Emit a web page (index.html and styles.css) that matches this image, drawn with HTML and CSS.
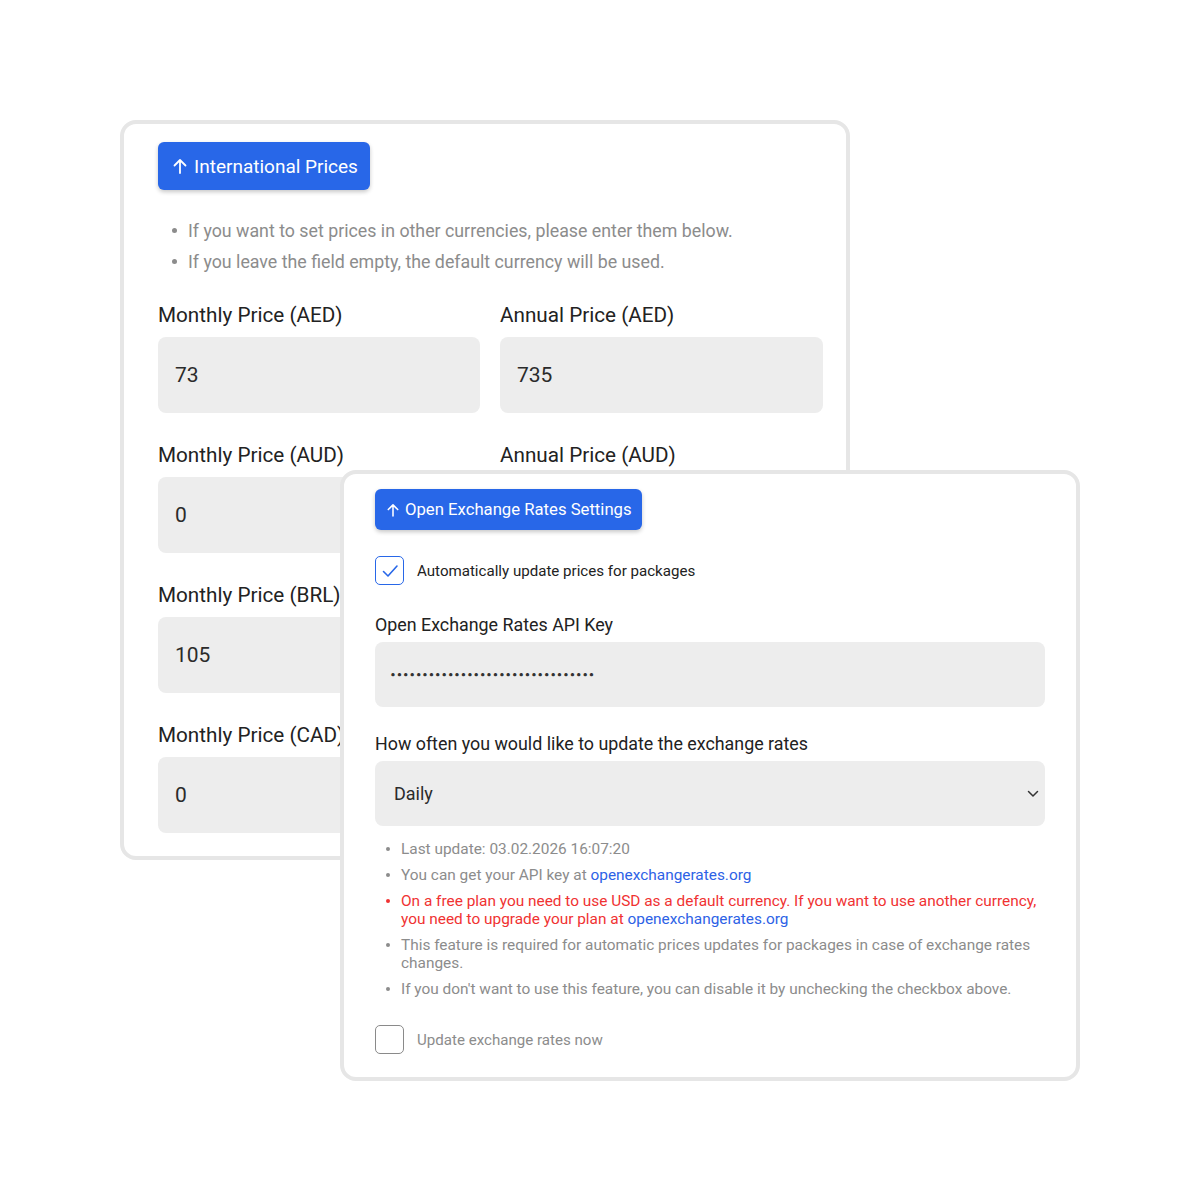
FILE: index.html
```html
<!DOCTYPE html>
<html lang="en">
<head>
    <meta charset="UTF-8">
    <meta name="viewport" content="width=device-width, initial-scale=1.0">
    <title>Package Prices</title>
    <link rel="stylesheet" href="styles.css">
</head>
<body>
    <div class="stage">
        <!-- international prices panel -->
        <section class="card card-prices">
            <button class="btn btn-lg" type="button">
                <svg class="arrow" viewBox="0 0 14 16" width="14" height="16"><path d="M7 15V2M1.5 7.5L7 2l5.5 5.5" fill="none" stroke="currentColor" stroke-width="1.8" stroke-linecap="round" stroke-linejoin="round"/></svg>
                International Prices
            </button>
            <ul class="hints hints-lg">
                <li>If you want to set prices in other currencies, please enter them below.</li>
                <li>If you leave the field empty, the default currency will be used.</li>
            </ul>
            <div class="price-grid">
                <div class="field">
                    <label>Monthly Price (AED)</label>
                    <div class="input input-lg">73</div>
                </div>
                <div class="field">
                    <label>Annual Price (AED)</label>
                    <div class="input input-lg">735</div>
                </div>
                <div class="field">
                    <label>Monthly Price (AUD)</label>
                    <div class="input input-lg">0</div>
                </div>
                <div class="field">
                    <label>Annual Price (AUD)</label>
                    <div class="input input-lg"></div>
                </div>
                <div class="field">
                    <label>Monthly Price (BRL)</label>
                    <div class="input input-lg">105</div>
                </div>
                <div class="field">
                    <label></label>
                    <div class="input input-lg"></div>
                </div>
                <div class="field">
                    <label>Monthly Price (CAD)</label>
                    <div class="input input-lg">0</div>
                </div>
                <div class="field">
                    <label></label>
                    <div class="input input-lg"></div>
                </div>
            </div>
        </section>

        <!-- exchange rate settings panel, sits on top -->
        <section class="card card-rates">
            <button class="btn btn-sm" type="button">
                <svg class="arrow" viewBox="0 0 14 16" width="12" height="14"><path d="M7 15V2M1.5 7.5L7 2l5.5 5.5" fill="none" stroke="currentColor" stroke-width="1.8" stroke-linecap="round" stroke-linejoin="round"/></svg>
                Open Exchange Rates Settings
            </button>

            <div class="check-row">
                <span class="checkbox checked">
                    <svg viewBox="0 0 20 20" width="20" height="20"><path d="M3.5 10.5l4.5 4.5 9-10" fill="none" stroke="currentColor" stroke-width="1.6" stroke-linecap="round" stroke-linejoin="round"/></svg>
                </span>
                <span class="check-label">Automatically update prices for packages</span>
            </div>

            <div class="field field-sm field-first">
                <label>Open Exchange Rates API Key</label>
                <div class="input input-sm"><span class="dots">••••••••••••••••••••••••••••••••</span></div>
            </div>

            <div class="field field-sm">
                <label>How often you would like to update the exchange rates</label>
                <div class="input input-sm select">
                    <span>Daily</span>
                    <svg viewBox="0 0 12 8" width="12" height="8"><path d="M1.5 1.5L6 6l4.5-4.5" fill="none" stroke="currentColor" stroke-width="1.5" stroke-linecap="round" stroke-linejoin="round"/></svg>
                </div>
            </div>

            <ul class="hints hints-sm">
                <li>Last update: 03.02.2026 16:07:20</li>
                <li>You can get your API key at <a href="#">openexchangerates.org</a></li>
                <li class="warn">On a free plan you need to use USD as a default currency. If you want to use another currency,<br>you need to upgrade your plan at <a href="#">openexchangerates.org</a></li>
                <li>This feature is required for automatic prices updates for packages in case of exchange rates changes.</li>
                <li>If you don't want to use this feature, you can disable it by unchecking the checkbox above.</li>
            </ul>

            <div class="check-row check-row-last">
                <span class="checkbox"></span>
                <span class="check-label muted">Update exchange rates now</span>
            </div>
        </section>
    </div>
</body>
</html>
```

FILE: styles.css
```css
body {
    margin: 0;
    background-color: #fff;
    font-family: 'Roboto', 'Noto Sans', sans-serif;
    color: #222;
}

.stage {
    position: relative;
    width: 1200px;
    height: 1200px;
    padding: 120px 0 0 120px;
    box-sizing: border-box;
}

.card {
    box-sizing: border-box;
    background-color: #fff;
    border: 4px solid #e6e6e6;
    border-radius: 16px;
}

.card-prices {
    width: 730px;
    height: 740px;
    padding: 18px 23px 22px 34px;
}

/* the settings card overlaps the prices card */
.card-rates {
    position: absolute;
    left: 340px;
    top: 470px;
    width: 740px;
    padding: 15px 31px 23px 31px;
}

.btn {
    display: inline-flex;
    align-items: center;
    border: none;
    background-color: #2867e8;
    color: #fff;
    font-family: inherit;
    border-radius: 6px;
    box-shadow: 0 2px 4px rgba(0, 0, 0, 0.22);
    cursor: pointer;
}

.btn-lg {
    height: 48px;
    padding: 0 12px 0 15px;
    font-size: 19px;
    gap: 7px;
}

.btn-sm {
    height: 41px;
    padding: 0 10px 0 12px;
    font-size: 16.7px;
    gap: 6px;
}

.hints {
    list-style: none;
    margin: 0;
    padding: 0;
    color: #8c8c8c;
}

.hints li {
    position: relative;
}

.hints li::before {
    content: '';
    position: absolute;
    border-radius: 50%;
    background-color: currentColor;
}

.hints-lg {
    margin: 25px 0 24px;
    font-size: 17.8px;
    line-height: 31px;
}

.hints-lg li {
    padding-left: 30px;
}

.hints-lg li::before {
    left: 14px;
    top: 13px;
    width: 5px;
    height: 5px;
}

.hints-sm {
    margin: 14px 0 27px;
    font-size: 15.4px;
    line-height: 18px;
}

.hints-sm li {
    padding-left: 26px;
}

.hints-sm li + li {
    margin-top: 8px;
}

.hints-sm li::before {
    left: 11px;
    top: 7px;
    width: 4px;
    height: 4px;
}

.hints .warn {
    color: #f03232;
}

.hints a {
    color: #2d62e6;
    text-decoration: none;
}

.price-grid {
    display: grid;
    grid-template-columns: 322px 323px;
    column-gap: 20px;
    row-gap: 28px;
}

.field {
    display: flex;
    flex-direction: column;
    gap: 8px;
}

.field label {
    min-height: 28px;
    font-size: 20.7px;
    line-height: 28px;
    color: #222;
}

.input {
    display: flex;
    align-items: center;
    box-sizing: border-box;
    background-color: #ededed;
    border-radius: 8px;
    color: #2b2b2b;
}

.input-lg {
    height: 76px;
    padding: 0 17px;
    font-size: 21px;
}

.field-sm {
    gap: 5px;
    margin-top: 25px;
}

.field-first {
    margin-top: 28px;
}

.field-sm label {
    min-height: 24px;
    font-size: 17.85px;
    line-height: 24px;
}

.input-sm {
    height: 65px;
    padding: 0 19px 0 15px;
    font-size: 18px;
}

/* masked api key */
.dots {
    font-family: 'Inter', sans-serif;
    font-size: 10.5px;
    letter-spacing: 0.5px;
    color: #333;
}

.select {
    justify-content: space-between;
    padding-left: 19px;
    padding-right: 6px;
}

.select svg {
    color: #333;
}

.check-row {
    display: flex;
    align-items: center;
    gap: 13px;
    margin-top: 26px;
}

.check-row-last {
    margin-top: 0;
}

.checkbox {
    display: flex;
    align-items: center;
    justify-content: center;
    box-sizing: border-box;
    width: 29px;
    height: 29px;
    border: 1.5px solid #8a8a8a;
    border-radius: 5px;
}

.checkbox.checked {
    border-color: #2867e8;
    color: #2867e8;
}

.check-label {
    font-size: 15.1px;
    color: #222;
}

.check-label.muted {
    color: #8c8c8c;
}
```
